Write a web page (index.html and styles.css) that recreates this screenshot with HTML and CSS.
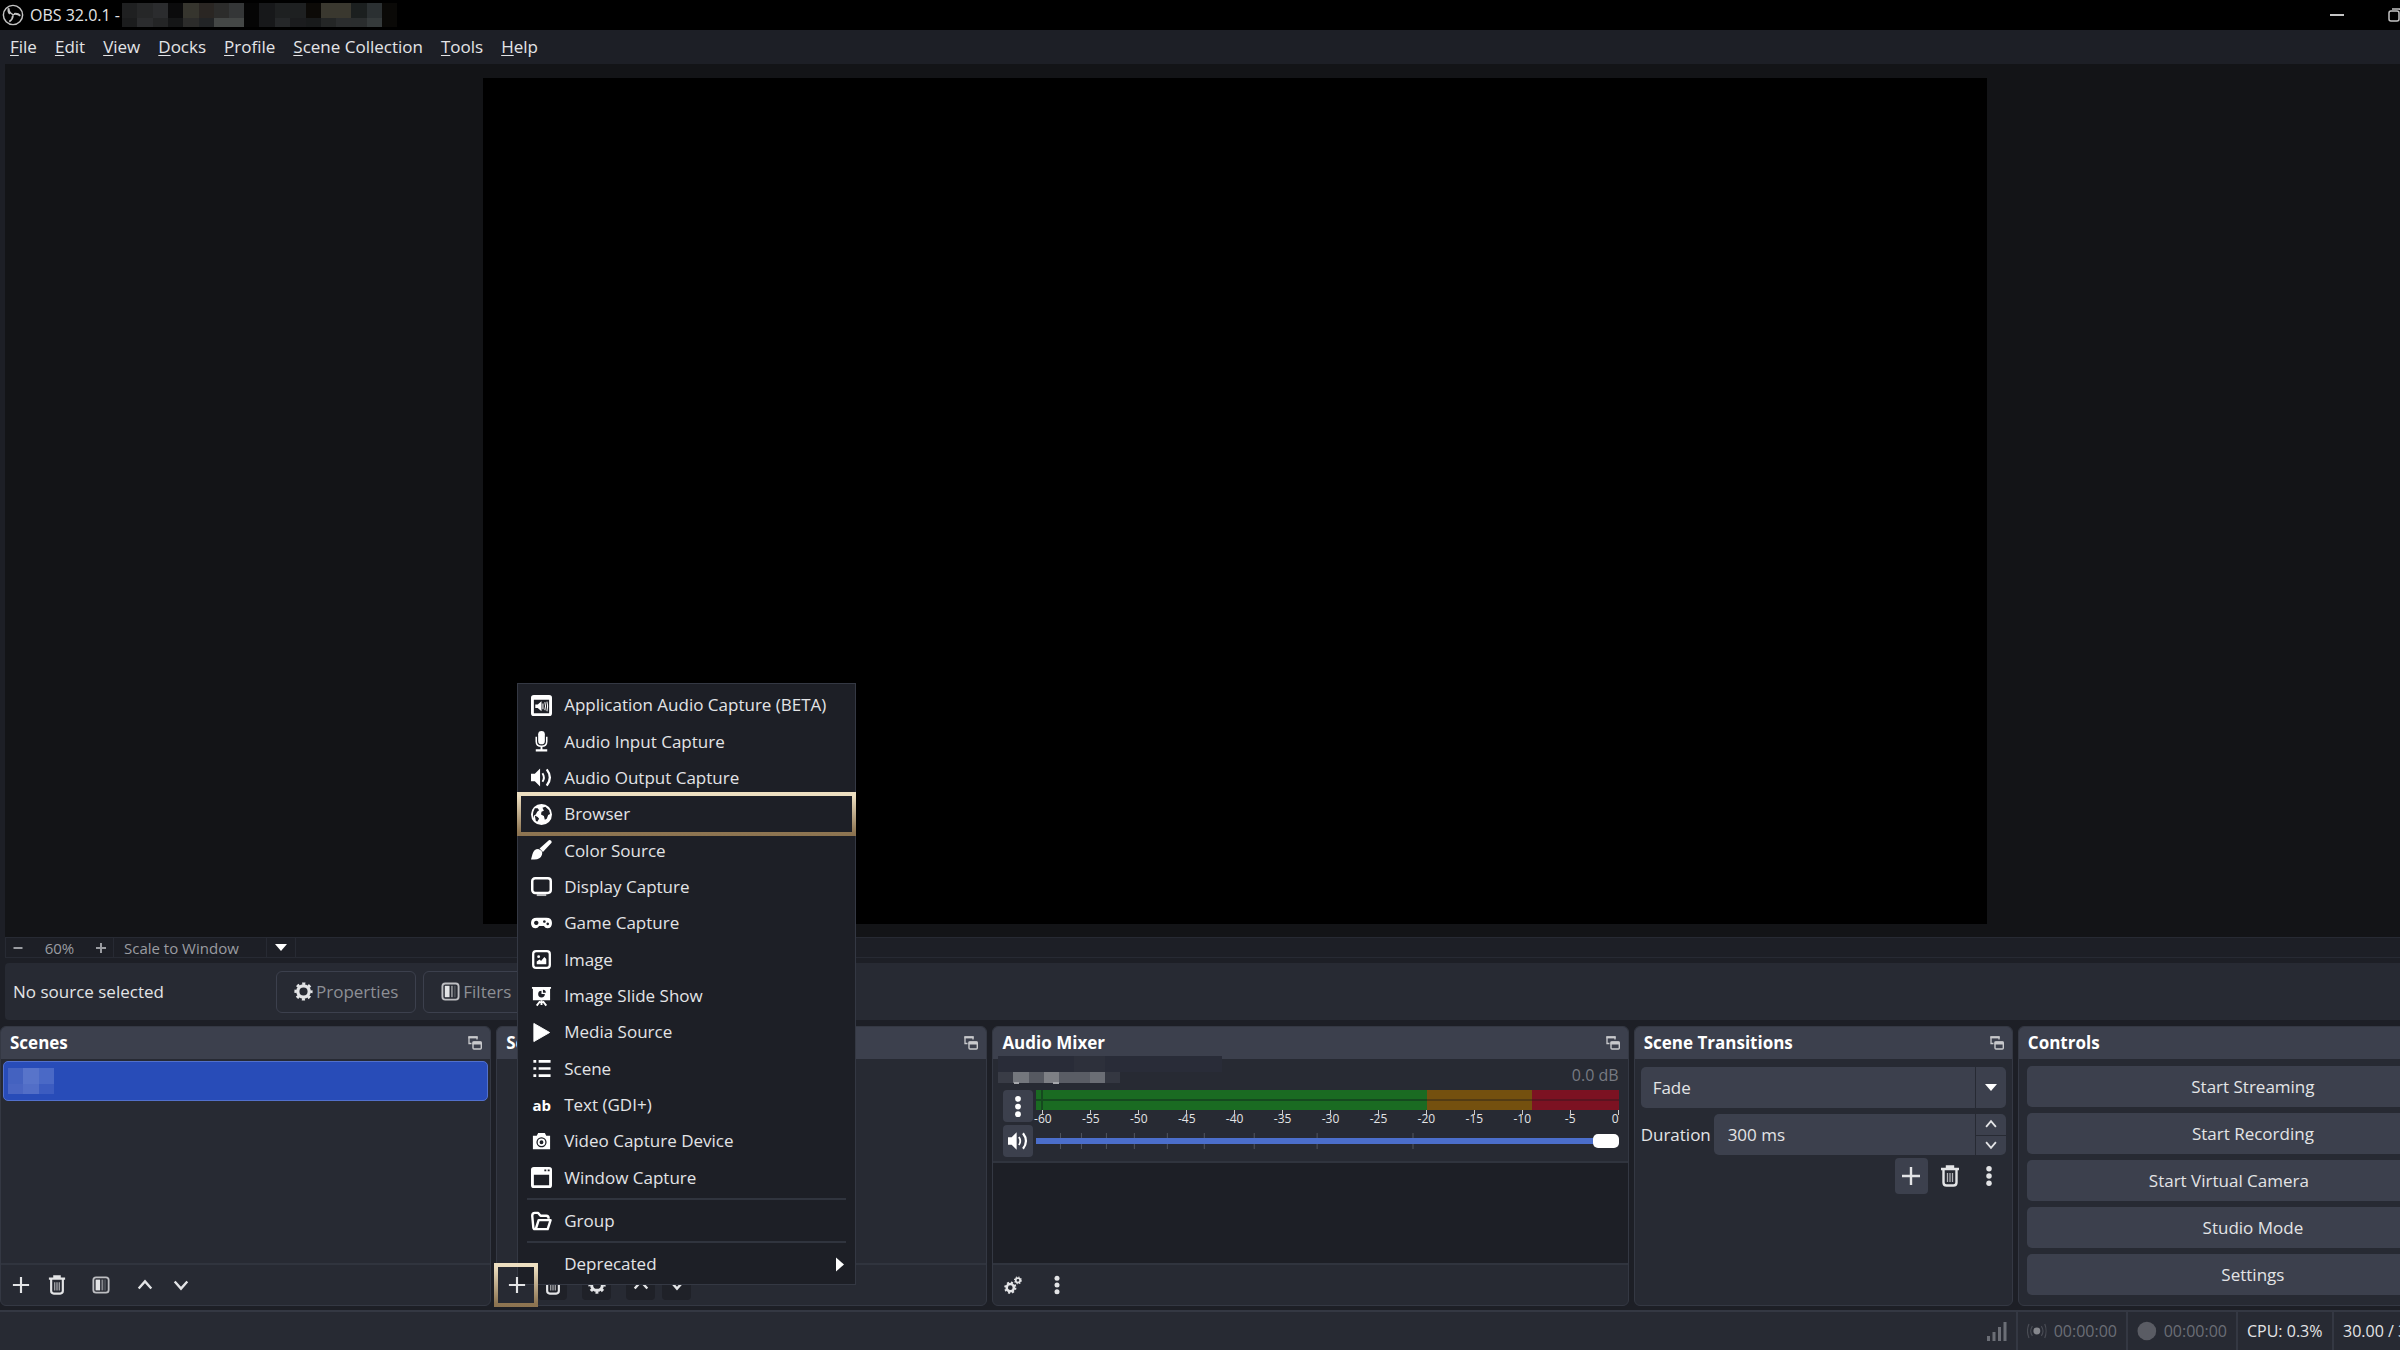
FILE: index.html
```
<!DOCTYPE html>
<html lang="en">
<head>
  <meta charset="UTF-8">
  <meta name="viewport" content="width=device-width, initial-scale=1.0">
  <title>OBS 32.0.1</title>
  <link rel="stylesheet" href="styles.css">
</head>
<body>

<!-- icon set -->
<svg class="sprite" aria-hidden="true">
  <symbol id="i-plus" viewBox="0 0 20 20"><path d="M10 1v18M1 10h18" fill="none" stroke="currentColor" stroke-width="2.4"/></symbol>
  <symbol id="i-minus" viewBox="0 0 20 20"><path d="M1 10h18" fill="none" stroke="currentColor" stroke-width="4"/></symbol>
  <symbol id="i-plus-bold" viewBox="0 0 20 20"><path d="M10 0v20M0 10h20" fill="none" stroke="currentColor" stroke-width="4"/></symbol>
  <symbol id="i-trash" viewBox="0 0 20 22"><path d="M1 4h18M7 3V1.500h6V3M3.500 5v12.500q0 3 3 3h7q3 0 3-3V5" fill="none" stroke="currentColor" stroke-width="2.400"/><path d="M7.500 8v9M10 8v9M12.500 8v9" stroke="currentColor" stroke-width="1.300" opacity=".75"/></symbol>
  <symbol id="i-filter" viewBox="0 0 20 20"><rect x="1.500" y="1.500" width="17" height="17" rx="3" fill="none" stroke="currentColor" stroke-width="2" opacity=".8"/><path d="M4 4h5v12H4z" fill="currentColor"/><path d="M10.500 4h2v12h-2z" fill="currentColor" opacity=".5"/><path d="M13.500 4h2v12h-2z" fill="currentColor" opacity=".2"/></symbol>
  <symbol id="i-up" viewBox="0 0 20 20"><path d="M3 14l7-8 7 8" fill="none" stroke="currentColor" stroke-width="2.600"/></symbol>
  <symbol id="i-down" viewBox="0 0 20 20"><path d="M3 6l7 8 7-8" fill="none" stroke="currentColor" stroke-width="2.600"/></symbol>
  <symbol id="i-caret" viewBox="0 0 12 8"><path d="M0 0h12L6 7z" fill="currentColor"/></symbol>
  <symbol id="i-dots" viewBox="0 0 8 24"><circle cx="4" cy="4" r="3" fill="currentColor"/><circle cx="4" cy="12" r="3" fill="currentColor"/><circle cx="4" cy="20" r="3" fill="currentColor"/></symbol>
  <symbol id="i-gear" viewBox="0 0 20 20"><circle cx="10" cy="10" r="6" fill="none" stroke="currentColor" stroke-width="3.400"/><circle cx="10" cy="10" r="8.300" fill="none" stroke="currentColor" stroke-width="2.600" stroke-dasharray="3.260 3.260" stroke-dashoffset="1.630"/></symbol>
  <symbol id="i-gears" viewBox="0 0 20 20"><circle cx="7" cy="13" r="4" fill="none" stroke="currentColor" stroke-width="2.800"/><circle cx="7" cy="13" r="5.800" fill="none" stroke="currentColor" stroke-width="2" stroke-dasharray="2.280 2.280"/><circle cx="15.500" cy="4.800" r="2.500" fill="none" stroke="currentColor" stroke-width="2"/><circle cx="15.500" cy="4.800" r="3.800" fill="none" stroke="currentColor" stroke-width="1.200" stroke-dasharray="1.490 1.490"/></symbol>
  <symbol id="i-popout" viewBox="0 0 14 14"><path d="M3.500 7.500H1V1h8v2.500" fill="none" stroke="currentColor" stroke-width="1.300"/><path d="M.4.400h9.200v2H.4z" fill="currentColor"/><rect x="5" y="6" width="8.300" height="7" rx="1" fill="none" stroke="currentColor" stroke-width="1.400"/><path d="M4.500 5.500h9v3h-9z" fill="currentColor"/></symbol>
  <symbol id="i-appaudio" viewBox="0 0 22 22"><path fill="currentColor" fill-rule="evenodd" d="M3 0h16q3 0 3 3v16q0 3-3 3H3q-3 0-3-3V3q0-3 3-3zM3 5v14h16V5z"/><path d="M4.500 10h2.500l4-3.500v10.500l-4-3.500H4.500z" fill="currentColor"/><path d="M12.500 9v6M14.500 7.500q1.500 4 0 8.500M16.700 7q1.600 5 0 10" fill="none" stroke="currentColor" stroke-width="1.100"/></symbol>
  <symbol id="i-mic" viewBox="0 0 22 22"><rect x="7.500" y="0" width="7" height="14" rx="3.500" fill="currentColor"/><path d="M5.500 6v5q0 5 5.500 5t5.500-5V6" fill="none" stroke="currentColor" stroke-width="1.600"/><path d="M10 16h2v3h5v2.500H5V19h5z" fill="currentColor"/></symbol>
  <symbol id="i-sound" viewBox="0 0 22 22"><path d="M0 7h4l5.500-5.500v19L4 15H0z" fill="currentColor"/><path d="M12 6.500q3 4.500 0 9" fill="none" stroke="currentColor" stroke-width="2"/><path d="M16.500 2.500q6.500 8.500 0 17" fill="none" stroke="currentColor" stroke-width="2.400"/></symbol>
  <symbol id="i-globe" viewBox="0 0 22 22"><circle cx="11" cy="11" r="11" fill="currentColor"/><path d="M4 4.500l3 0 1.500 2-2 1.500-1.500 3L3 12v3l-1-3q0-4 2-7.500zM4 12l3 1.500 1.500 2-2 3-1.500-1zM12 4l3-1 4 3.500 1 4-2 1-1.500 4-2 1-1-4-3-1.500.500-3 2.500-1z" fill="#1d1f26"/></symbol>
  <symbol id="i-brush" viewBox="0 0 22 22"><path d="M19 0q3 0 2.500 3l-9 9.500-3.500-3.500z" fill="currentColor"/><path d="M7.500 9.500q5.500 1.500 4 6-1.500 5-8 5H0l1.500-5.500q1.500-5.500 6-5.500z" fill="currentColor"/></symbol>
  <symbol id="i-display" viewBox="0 0 22 22"><rect x="1.300" y="2.300" width="19.400" height="15.400" rx="3" fill="none" stroke="currentColor" stroke-width="2.600"/><path d="M6 19h10v2H6z" fill="currentColor" opacity=".7"/></symbol>
  <symbol id="i-game" viewBox="0 0 22 22"><path fill="currentColor" fill-rule="evenodd" d="M6 5h10q6 0 6 5.500t-5 5.500q-2 0-3.500-2.500h-5Q7 16 5 16q-5 0-5-5.500T6 5zM5.500 8a2.300 2.300 0 1 0 .01 0zM14 7.500a1.400 1.400 0 1 0 .01 0zM17.500 10a1.400 1.400 0 1 0 .01 0z"/></symbol>
  <symbol id="i-image" viewBox="0 0 22 22"><rect x="2.300" y="2.300" width="17.400" height="17.400" rx="3" fill="none" stroke="currentColor" stroke-width="2.400"/><circle cx="8" cy="8" r="1.500" fill="currentColor"/><path d="M6 16v-3l3-2 1.500 1.500L14 8.500l2 2V16z" fill="currentColor"/></symbol>
  <symbol id="i-slides" viewBox="0 0 22 22"><path fill="currentColor" fill-rule="evenodd" d="M1 1h20v2h-1v12H2V3H1zM11 5a3.500 3.500 0 1 0 3.500 3.500H11z"/><path d="M12.500 4a3 3 0 0 1 3 3h-3z" fill="#1d1f26"/><path d="M11 15v5M9.500 16L6 20.500M12.500 16l3.500 4.500" stroke="currentColor" stroke-width="2"/></symbol>
  <symbol id="i-play" viewBox="0 0 22 22"><path d="M3 1.500l16.500 9.500L3 20.500z" fill="currentColor" stroke="currentColor" stroke-width="1"/></symbol>
  <symbol id="i-list" viewBox="0 0 22 22"><path d="M2.500 3.500h3M2.500 11h3M2.500 18.500h3M8 3.500h12.500M8 11h12.500M8 18.500h12.500" stroke="currentColor" stroke-width="2.800"/></symbol>
  <symbol id="i-camera" viewBox="0 0 22 22"><path fill="currentColor" fill-rule="evenodd" d="M2 5h4l1.500-3h7L16 5h4v14H2zM11 6.500a5.300 5.300 0 1 0 .01 0z"/><circle cx="11" cy="11.800" r="3" fill="none" stroke="currentColor" stroke-width="2"/></symbol>
  <symbol id="i-window" viewBox="0 0 22 22"><path fill="currentColor" fill-rule="evenodd" d="M3 0h16q3 0 3 3v16q0 3-3 3H3q-3 0-3-3V3q0-3 3-3zM3 8v11h16V8z"/><path d="M14 3.500h2M17.500 3.500h2" stroke="#1d1f26" stroke-width="2"/></symbol>
  <symbol id="i-folder" viewBox="0 0 22 22"><path d="M2.500 18L1.300 5q0-3 2.700-3h3.500l2.500 3h6q2.500 0 2.500 3M5 19l3-9.500h12.500L17.500 19H4q-1.500 0-1.500-2" fill="none" stroke="currentColor" stroke-width="2.500" stroke-linejoin="round"/></symbol>
  <symbol id="i-obs" viewBox="0 0 24 24"><circle cx="12" cy="12" r="10.500" fill="none" stroke="currentColor" stroke-width="1.600"/><path d="M7.500 4.500q0 5 4.500 7 4-1.500 8 1.500M12 11.500q.5 5-4 8M7 4.500q-1 4 1.500 6.500M20 12.500q-3-3-7-2M8 19q3.500-2 3.500-6" fill="none" stroke="currentColor" stroke-width="1.500"/></symbol>
  <symbol id="i-signal" viewBox="0 0 20 20"><path d="M0 15h3v5H0zM5.500 11h3v9h-3zM11 6h3v14h-3zM16.500 1h3v19h-3z" fill="currentColor"/></symbol>
  <symbol id="i-live" viewBox="0 0 20 20"><circle cx="10" cy="10" r="3.500" fill="#85878d"/><path d="M5.500 5q-3.500 5 0 10M14.500 5q3.500 5 0 10M2 3q-3 7 0 14M18 3q3 7 0 14" fill="none" stroke="currentColor" stroke-width="1.200" opacity=".5"/></symbol>
  <symbol id="i-rec" viewBox="0 0 20 20"><circle cx="10" cy="10" r="9.500" fill="#5a5c64"/></symbol>
</svg>

<div class="app">
  <header class="titlebar">
    <svg class="logo"><use href="#i-obs"/></svg>
    <span>OBS 32.0.1 -</span>
    <svg class="title-mask" viewBox="0 0 276 24">
      <path fill="#1f2021" d="M0 0h15v15H0z"/><path fill="#262728" d="M15 0h16v15H15z"/><path fill="#2b2c2e" d="M31 0h15v15H31zM15 15h16v9H15z"/>
      <path fill="#1b1c1d" d="M0 15h15v9H0z"/><path fill="#242526" d="M31 15h15v9H31z"/><path fill="#0b0b0c" d="M46 0h15v15H46z"/><path fill="#151617" d="M46 15h15v9H46z"/>
      <path fill="#36352e" d="M61 0h16v15H61z"/><path fill="#2a2623" d="M77 0h15v15H77z"/><path fill="#2c2c2b" d="M92 0h15v15H92zM61 15h16v9H61z"/><path fill="#343637" d="M107 0h15v15h-15z"/><path fill="#222426" d="M77 15h15v9H77z"/><path fill="#444746" d="M92 15h30v9H92z"/>
      <path fill="#050505" d="M122 0h15v24h-15z"/><path fill="#17181a" d="M137 0h16v24h-16z"/><path fill="#1e2021" d="M153 0h31v15h-31z"/><path fill="#252729" d="M153 15h15v9h-15z"/><path fill="#1b1c1e" d="M168 15h16v9h-16z"/>
      <path fill="#0c0a07" d="M184 0h15v15h-15z"/><path fill="#181a1b" d="M184 15h15v9h-15z"/><path fill="#3a382f" d="M199 0h30v15h-30z"/><path fill="#242626" d="M199 15h15v9h-15z"/><path fill="#2b2d2e" d="M214 15h15v9h-15z"/>
      <path fill="#1b1f1f" d="M229 0h16v15h-16z"/><path fill="#2a2d2e" d="M229 15h16v9h-16z"/><path fill="#2b3032" d="M245 0h15v15h-15z"/><path fill="#353a3b" d="M245 15h15v9h-15z"/><path fill="#0a0907" d="M260 0h15v24h-15z"/>
    </svg>
    <div class="win-buttons">
      <button aria-label="Minimize"><svg viewBox="0 0 14 14"><path d="M0 7h14" stroke="currentColor" stroke-width="2"/></svg></button>
      <button aria-label="Restore"><svg viewBox="0 0 14 14"><rect x="1" y="3" width="10" height="10" rx="2" fill="none" stroke="currentColor" stroke-width="1.500"/><path d="M4 1h7q2 0 2 2v7" fill="none" stroke="currentColor" stroke-width="1.500"/></svg></button>
      <button aria-label="Close"><svg viewBox="0 0 14 14"><path d="M1 1l12 12M13 1L1 13" stroke="currentColor" stroke-width="1.500"/></svg></button>
    </div>
  </header>

  <nav class="menubar">
    <a href="#"><u>F</u>ile</a>
    <a href="#"><u>E</u>dit</a>
    <a href="#"><u>V</u>iew</a>
    <a href="#"><u>D</u>ocks</a>
    <a href="#"><u>P</u>rofile</a>
    <a href="#"><u>S</u>cene Collection</a>
    <a href="#"><u>T</u>ools</a>
    <a href="#"><u>H</u>elp</a>
  </nav>

  <main class="preview">
    <div class="canvas"></div>
  </main>

  <div class="zoombar">
    <button aria-label="Zoom out"><svg><use href="#i-minus"/></svg></button>
    <span class="zoom-level">60%</span>
    <button aria-label="Zoom in"><svg><use href="#i-plus-bold"/></svg></button>
    <span class="scale-mode">Scale to Window</span>
    <button class="scale-menu" aria-label="Scaling mode"><svg class="caret"><use href="#i-caret"/></svg></button>
  </div>

  <div class="context">
    <span class="context-label">No source selected</span>
    <button class="outline-btn" disabled><svg><use href="#i-gear"/></svg>Properties</button>
    <button class="outline-btn" disabled><svg><use href="#i-filter"/></svg>Filters</button>
  </div>

  <div class="docks">
    <section class="dock">
      <div class="dock-title"><h2>Scenes</h2><button aria-label="Pop out"><svg><use href="#i-popout"/></svg></button></div>
      <div class="dock-body">
        <ul class="scene-list">
          <li>
            <svg class="scene-mask" viewBox="0 0 46 26">
              <path fill="#4462c0" d="M0 0h15v16H0z"/><path fill="#5874ca" d="M15 0h16v16H15z"/><path fill="#4a69c6" d="M31 0h15v16H31z"/>
              <path fill="#4965c2" d="M0 16h15v10H0z"/><path fill="#526ec7" d="M15 16h16v10H15z"/><path fill="#3c5cc0" d="M31 16h15v10H31z"/>
            </svg>
          </li>
        </ul>
      </div>
      <div class="toolbar">
        <button aria-label="Add scene"><svg><use href="#i-plus"/></svg></button>
        <button aria-label="Remove scene"><svg><use href="#i-trash"/></svg></button>
        <button class="spaced" aria-label="Scene filters"><svg><use href="#i-filter"/></svg></button>
        <button class="spaced" aria-label="Move scene up"><svg><use href="#i-up"/></svg></button>
        <button aria-label="Move scene down"><svg><use href="#i-down"/></svg></button>
      </div>
    </section>

    <section class="dock">
      <div class="dock-title"><h2>Sources</h2><button aria-label="Pop out"><svg><use href="#i-popout"/></svg></button></div>
      <div class="dock-body"></div>
      <div class="toolbar sources-toolbar">
        <button class="marked" aria-label="Add source"><svg><use href="#i-plus"/></svg></button>
        <button aria-label="Remove source"><svg><use href="#i-trash"/></svg></button>
        <button class="spaced" aria-label="Source properties"><svg><use href="#i-gear"/></svg></button>
        <button class="spaced" aria-label="Move source up"><svg><use href="#i-up"/></svg></button>
        <button aria-label="Move source down"><svg><use href="#i-down"/></svg></button>

        <div class="source-menu" role="menu">
          <div class="source-types">
            <button role="menuitem"><svg><use href="#i-appaudio"/></svg>Application Audio Capture (BETA)</button>
            <button role="menuitem"><svg><use href="#i-mic"/></svg>Audio Input Capture</button>
            <button role="menuitem"><svg><use href="#i-sound"/></svg>Audio Output Capture</button>
            <button role="menuitem" class="highlight"><svg><use href="#i-globe"/></svg>Browser</button>
            <button role="menuitem"><svg><use href="#i-brush"/></svg>Color Source</button>
            <button role="menuitem"><svg><use href="#i-display"/></svg>Display Capture</button>
            <button role="menuitem"><svg><use href="#i-game"/></svg>Game Capture</button>
            <button role="menuitem"><svg><use href="#i-image"/></svg>Image</button>
            <button role="menuitem"><svg><use href="#i-slides"/></svg>Image Slide Show</button>
            <button role="menuitem"><svg><use href="#i-play"/></svg>Media Source</button>
            <button role="menuitem"><svg><use href="#i-list"/></svg>Scene</button>
            <button role="menuitem"><span class="ab">ab</span>Text (GDI+)</button>
            <button role="menuitem"><svg><use href="#i-camera"/></svg>Video Capture Device</button>
            <button role="menuitem"><svg><use href="#i-window"/></svg>Window Capture</button>
          </div>
          <hr>
          <button role="menuitem"><svg><use href="#i-folder"/></svg>Group</button>
          <hr>
          <button role="menuitem" class="submenu">Deprecated<svg viewBox="0 0 8 14"><path d="M0 0l8 7-8 7z" fill="currentColor"/></svg></button>
        </div>
      </div>
    </section>

    <section class="dock">
      <div class="dock-title"><h2>Audio Mixer</h2><button aria-label="Pop out"><svg><use href="#i-popout"/></svg></button></div>
      <div class="channel">
        <svg class="channel-mask" viewBox="0 0 224 28">
          <path fill="#292c38" d="M0 0h224v16H0z"/><path fill="#2d303b" d="M76 0h31v16H76z"/>
          <path fill="#393c46" d="M0 16h15v11H0z"/><path fill="#74777d" d="M15 16h16v11H15z"/><path fill="#565961" d="M31 16h15v11H31z"/><path fill="#7e8085" d="M46 16h15v11H46z"/><path fill="#5a5d65" d="M61 16h31v11H61z"/><path fill="#6b6e75" d="M92 16h15v11H92z"/><path fill="#343741" d="M107 16h15v11h-15z"/>
          <path fill="#a5a7ab" d="M16 26h5v2h-5zM55 26h6v2h-6z"/>
        </svg>
        <span class="db">0.0 dB</span>
        <button class="square" aria-label="Channel options"><svg><use href="#i-dots"/></svg></button>
        <div class="meter">
          <div class="bar"></div>
          <div class="bar"></div>
          <div class="ticks">
            <span>-60</span><span>-55</span><span>-50</span><span>-45</span><span>-40</span><span>-35</span><span>-30</span><span>-25</span><span>-20</span><span>-15</span><span>-10</span><span>-5</span><span>0</span>
          </div>
        </div>
        <button class="square" aria-label="Mute"><svg class="mute"><use href="#i-sound"/></svg></button>
        <div class="fader">
          <svg viewBox="0 0 583 16" preserveAspectRatio="none"><path d="M24.500 0v16M45.500 0v16M70.500 0v16M98.500 0v16M131.500 0v16M168.500 0v16M218.500 0v16M281.500 0v16M377.500 0v16" stroke="#50545f" stroke-width="1"/></svg>
          <input type="range" min="0" max="100" value="100" aria-label="Volume">
        </div>
      </div>
      <div class="mixer-empty"></div>
      <div class="toolbar">
        <button aria-label="Advanced audio"><svg><use href="#i-gears"/></svg></button>
        <button class="spaced" aria-label="Mixer options"><svg><use href="#i-dots"/></svg></button>
      </div>
    </section>

    <section class="dock">
      <div class="dock-title"><h2>Scene Transitions</h2><button aria-label="Pop out"><svg><use href="#i-popout"/></svg></button></div>
      <div class="transitions">
        <div class="field">
          <select aria-label="Transition"><option>Fade</option></select>
          <span class="field-arrow"><svg class="caret"><use href="#i-caret"/></svg></span>
        </div>
        <div class="duration">
          <label for="duration">Duration</label>
          <div class="field">
            <input type="text" id="duration" value="300 ms">
            <div class="spin">
              <button aria-label="Increase"><svg><use href="#i-up"/></svg></button>
              <button aria-label="Decrease"><svg><use href="#i-down"/></svg></button>
            </div>
          </div>
        </div>
        <div class="transition-tools">
          <button class="filled" aria-label="Add transition"><svg><use href="#i-plus"/></svg></button>
          <button aria-label="Remove transition"><svg><use href="#i-trash"/></svg></button>
          <button aria-label="Transition options"><svg><use href="#i-dots"/></svg></button>
        </div>
      </div>
    </section>

    <section class="dock">
      <div class="dock-title"><h2>Controls</h2><button aria-label="Pop out"><svg><use href="#i-popout"/></svg></button></div>
      <div class="controls">
        <button>Start Streaming</button>
        <button>Start Recording</button>
        <div class="control-row">
          <button>Start Virtual Camera</button>
          <button class="camera-config" aria-label="Virtual camera settings"><svg><use href="#i-gear"/></svg></button>
        </div>
        <button>Studio Mode</button>
        <button>Settings</button>
      </div>
    </section>
  </div>

  <footer class="statusbar">
    <div class="dim"><svg><use href="#i-signal"/></svg></div>
    <div class="dim timer"><svg><use href="#i-live"/></svg>00:00:00</div>
    <div class="dim timer"><svg><use href="#i-rec"/></svg>00:00:00</div>
    <div class="cpu">CPU: 0.3%</div>
    <div class="fps">30.00 / 30.00 FPS</div>
  </footer>
</div>

</body>
</html>
```
FILE: styles.css
```
* {
  box-sizing: border-box;
}
body {
  margin: 0;
  overflow: hidden;
  background: #1d1f26;
  color: #e3e4e6;
  font-family: "Open Sans", "Noto Sans", sans-serif;
  font-size: 17px;
  line-height: 24px;
}
button, input, select {
  font: inherit;
  color: inherit;
  margin: 0;
  padding: 0;
  border: 0;
  background: none;
}
.sprite {
  position: absolute;
  width: 0;
  height: 0;
}

/* the window runs past the right edge of the screen */
.app {
  display: flex;
  flex-direction: column;
  width: calc(100% + 88px);
  height: 100vh;
}

.titlebar {
  display: flex;
  align-items: center;
  height: 30px;
  padding-left: 2px;
  background: #000;
  font-size: 16px;
}
.titlebar .logo {
  width: 22px;
  height: 24px;
  margin-right: 6px;
  color: #c4c4c4;
}
.title-mask {
  width: 276px;
  height: 24px;
  margin-left: 2px;
}
.win-buttons {
  display: flex;
  gap: 44px;
  margin-left: auto;
  padding-right: 28px;
  color: #c4c4c4;
}
.win-buttons button {
  display: flex;
}
.win-buttons svg {
  width: 14px;
  height: 14px;
}

.menubar {
  display: flex;
  align-items: center;
  gap: 18px;
  height: 34px;
  padding-left: 10px;
}
.menubar a {
  color: inherit;
  text-decoration: none;
}
.menubar u {
  text-underline-offset: 2px;
}

.preview {
  flex: 1;
  min-height: 0;
  display: flex;
  justify-content: center;
  margin-left: 5px;
  padding: 14px 24px 13px 0;
  background: #131417;
}
.canvas {
  height: 100%;
  aspect-ratio: 16 / 9;
  background: #000;
}

.zoombar {
  display: flex;
  align-items: stretch;
  height: 21px;
  margin-left: 5px;
  border: 1px solid #272a33;
  font-size: 15px;
  line-height: 20px;
  color: #9a9ca1;
}
.zoombar button {
  display: flex;
  align-items: center;
  justify-content: center;
  width: 24px;
}
.zoombar button svg {
  width: 10px;
  height: 10px;
}
.zoom-level {
  width: 59px;
  text-align: center;
}
.scale-mode {
  width: 154px;
  padding-left: 10px;
  border-left: 1px solid #272a33;
  border-right: 1px solid #272a33;
}
.zoombar .scale-menu {
  width: 29px;
  border-right: 1px solid #272a33;
  color: #fff;
}
svg.caret, .zoombar button svg.caret {
  width: 12px;
  height: 8px;
}

.context {
  display: flex;
  align-items: center;
  gap: 7px;
  height: 57px;
  margin: 5px 0 6px 5px;
  padding-left: 8px;
  background: #272a33;
  border-radius: 4px;
}
.context-label {
  width: 256px;
}
.outline-btn {
  display: flex;
  align-items: center;
  gap: 3px;
  height: 42px;
  padding: 0 17px;
  border: 1px solid #3c404d;
  border-radius: 6px;
  color: #8d8f95;
}
.outline-btn svg {
  width: 19px;
  height: 19px;
  color: #e3e4e6;
}

.docks {
  display: grid;
  grid-template-columns: 491fr 491fr 636fr 379fr 470fr;
  gap: 5px;
}
.dock {
  display: flex;
  flex-direction: column;
  min-width: 0;
  background: #272a33;
  border: 1px solid #343843;
  border-radius: 6px;
}
.dock-title {
  display: flex;
  align-items: center;
  justify-content: space-between;
  height: 32px;
  padding: 0 8px 0 9px;
  background: #3c404d;
  border-radius: 5px 5px 0 0;
}
.dock-title h2 {
  margin: 0;
  font-size: 17px;
  font-weight: 700;
  color: #fff;
}
.dock-title button {
  display: flex;
  color: #c8c9cc;
}
.dock-title svg {
  width: 14px;
  height: 14px;
}
.dock-body {
  flex: 1;
}
.scene-list {
  margin: 0;
  padding: 2px;
  list-style: none;
}
.scene-list li {
  display: flex;
  align-items: center;
  height: 40px;
  padding-left: 4px;
  background: #284cb8;
  border: 1px solid #5270cc;
  border-radius: 5px;
}
.scene-mask {
  width: 46px;
  height: 26px;
}

.toolbar {
  display: flex;
  align-items: center;
  gap: 7px;
  height: 42px;
  padding-left: 5px;
  border-top: 2px solid #30343e;
}
.toolbar > button {
  display: flex;
  align-items: center;
  justify-content: center;
  width: 29px;
  height: 30px;
  border-radius: 4px;
}
.toolbar > button.spaced {
  margin-left: 8px;
}
.toolbar > button svg {
  width: 18px;
  height: 20px;
}
.sources-toolbar {
  position: relative;
}
.sources-toolbar > button {
  background: #1f2128;
}
.sources-toolbar > .marked {
  position: relative;
  background: none;
}
.marked::after, .highlight::after {
  content: "";
  position: absolute;
  border: 4px solid;
  border-image: linear-gradient(#eee0c2, #8c7350) 1;
}
.marked::after {
  inset: -7px -7px -7px -8px;
  z-index: 3;
}
.marked svg {
  position: relative;
  z-index: 3;
}

.source-menu {
  position: absolute;
  left: 20px;
  bottom: 20px;
  z-index: 2;
  width: 339px;
  padding: 3px 0 2px;
  background: #1d1f26;
  border: 1px solid #343843;
}
/* the source types share the column evenly */
.source-types {
  display: grid;
  grid-auto-rows: 1fr;
  height: 509px;
}
.source-menu button {
  position: relative;
  display: flex;
  align-items: center;
  gap: 12px;
  width: 100%;
  min-height: 36px;
  padding-left: 13px;
  text-align: left;
}
.source-menu svg {
  width: 21px;
  height: 21px;
  color: #fff;
}
.source-menu hr {
  height: 2px;
  margin: 2px 9px 3px;
  border: 0;
  background: #30343e;
}
.source-menu .submenu {
  justify-content: space-between;
  padding: 0 11px 0 46px;
}
.source-menu .submenu svg {
  width: 8px;
  height: 15px;
}
.highlight::after {
  inset: -4px -1px;
}
.ab {
  width: 21px;
  font-size: 15px;
  font-weight: 700;
  text-align: center;
  color: #fff;
}

.channel {
  display: grid;
  grid-template-columns: 30px 1fr;
  column-gap: 3px;
  row-gap: 3px;
  position: relative;
  padding: 4px 9px 4px 10px;
  border-bottom: 2px solid #30343e;
}
.channel-mask {
  position: absolute;
  left: 5px;
  top: -3px;
  width: 224px;
  height: 28px;
}
.db {
  grid-column: 1 / 3;
  text-align: right;
  font-size: 16px;
  color: #777a82;
}
.square {
  display: flex;
  align-items: center;
  justify-content: center;
  height: 32px;
  background: #3c404d;
  border-radius: 4px;
  color: #fff;
}
.square svg {
  width: 8px;
  height: 23px;
}
.square svg.mute {
  width: 22px;
  height: 20px;
}
/* the scale hangs below the meter, beside the mute button */
.meter {
  height: 32px;
  background: linear-gradient(to right, #15491f 67%, #523b14 67% 85%, #5a1420 85%) 0 0 / 100% 20px no-repeat;
}
.bar {
  height: 9px;
  margin-bottom: 2px;
  background: linear-gradient(to right, transparent 5px, #15491f 5px 7px, transparent 7px),
    linear-gradient(to right, #1a6b22 67%, #74500f 67% 85%, #7c1222 85%);
}
.bar + .bar {
  margin-bottom: 0;
}
.ticks {
  display: flex;
  justify-content: space-between;
  padding-left: 6px;
  font-size: 12px;
  line-height: 18px;
}
.ticks span {
  position: relative;
  display: flex;
  justify-content: center;
  width: 1px;
}
.ticks span:last-child {
  justify-content: flex-end;
}
.ticks span::before {
  content: "";
  position: absolute;
  top: 0;
  width: 1px;
  height: 5px;
  background: #c8c9cc;
}
.fader {
  display: grid;
  align-items: center;
}
.fader > * {
  grid-area: 1 / 1;
  width: 100%;
  height: 16px;
}
.fader input {
  appearance: none;
  background: linear-gradient(#4b6ecb, #4b6ecb) center / 100% 6px no-repeat;
}
.fader input::-webkit-slider-thumb {
  appearance: none;
  width: 26px;
  height: 14px;
  border-radius: 5px;
  background: #fff;
}
.mixer-empty {
  flex: 1;
  background: #1d1f26;
}

.transitions {
  display: flex;
  flex-direction: column;
  gap: 6px;
  padding: 8px 6px;
}
.field {
  display: grid;
  grid-template-columns: 1fr 31px;
  flex: 1;
  min-width: 0;
  height: 41px;
  background: #3c404d;
  border-radius: 5px;
}
.transitions > .field {
  flex: none;
}
.field select {
  appearance: none;
  grid-area: 1 / 1 / 2 / 3;
  padding-left: 12px;
}
.field-arrow {
  grid-area: 1 / 2;
  display: flex;
  align-items: center;
  justify-content: center;
  border-left: 1px solid #272a33;
  color: #fff;
  pointer-events: none;
}
.duration {
  display: flex;
  align-items: center;
  gap: 5px;
}
.duration label {
  width: 68px;
}
.field input {
  min-width: 0;
  padding-left: 14px;
}
.spin {
  display: grid;
  grid-template-rows: 1fr 1fr;
  border-left: 1px solid #272a33;
}
.spin button {
  display: flex;
  align-items: center;
  justify-content: center;
}
.spin button + button {
  border-top: 1px solid #272a33;
}
.spin svg {
  width: 16px;
  height: 14px;
}
.transition-tools {
  display: flex;
  justify-content: flex-end;
  gap: 6px;
  margin-top: -3px;
}
.transition-tools button {
  display: flex;
  align-items: center;
  justify-content: center;
  width: 33px;
  height: 36px;
  border-radius: 4px;
}
.transition-tools .filled {
  background: #3c404d;
}
.transition-tools svg {
  width: 20px;
  height: 22px;
}

.controls {
  display: flex;
  flex-direction: column;
  gap: 6px;
  padding: 7px 8px 10px;
}
.controls button {
  height: 41px;
  background: #3c404d;
  border-radius: 5px;
}
.control-row {
  display: flex;
  gap: 6px;
}
.control-row button {
  flex: 1;
}
.control-row .camera-config {
  flex: none;
  width: 42px;
}
.camera-config svg {
  width: 20px;
  height: 20px;
}

.statusbar {
  display: flex;
  justify-content: flex-end;
  height: 40px;
  margin-top: 4px;
  background: #272a33;
  border-top: 2px solid #343843;
  font-size: 16px;
}
.statusbar div {
  display: flex;
  align-items: center;
  gap: 7px;
  padding: 0 9px;
  border-left: 2px solid #343843;
  white-space: nowrap;
}
.statusbar div:first-child {
  border-left: 0;
}
.statusbar .dim {
  color: #6b6e76;
}
.statusbar svg {
  width: 20px;
  height: 20px;
}
.statusbar .timer {
  width: 110px;
}
.statusbar .cpu {
  width: 96px;
}
.statusbar .fps {
  width: 156px;
}
```
